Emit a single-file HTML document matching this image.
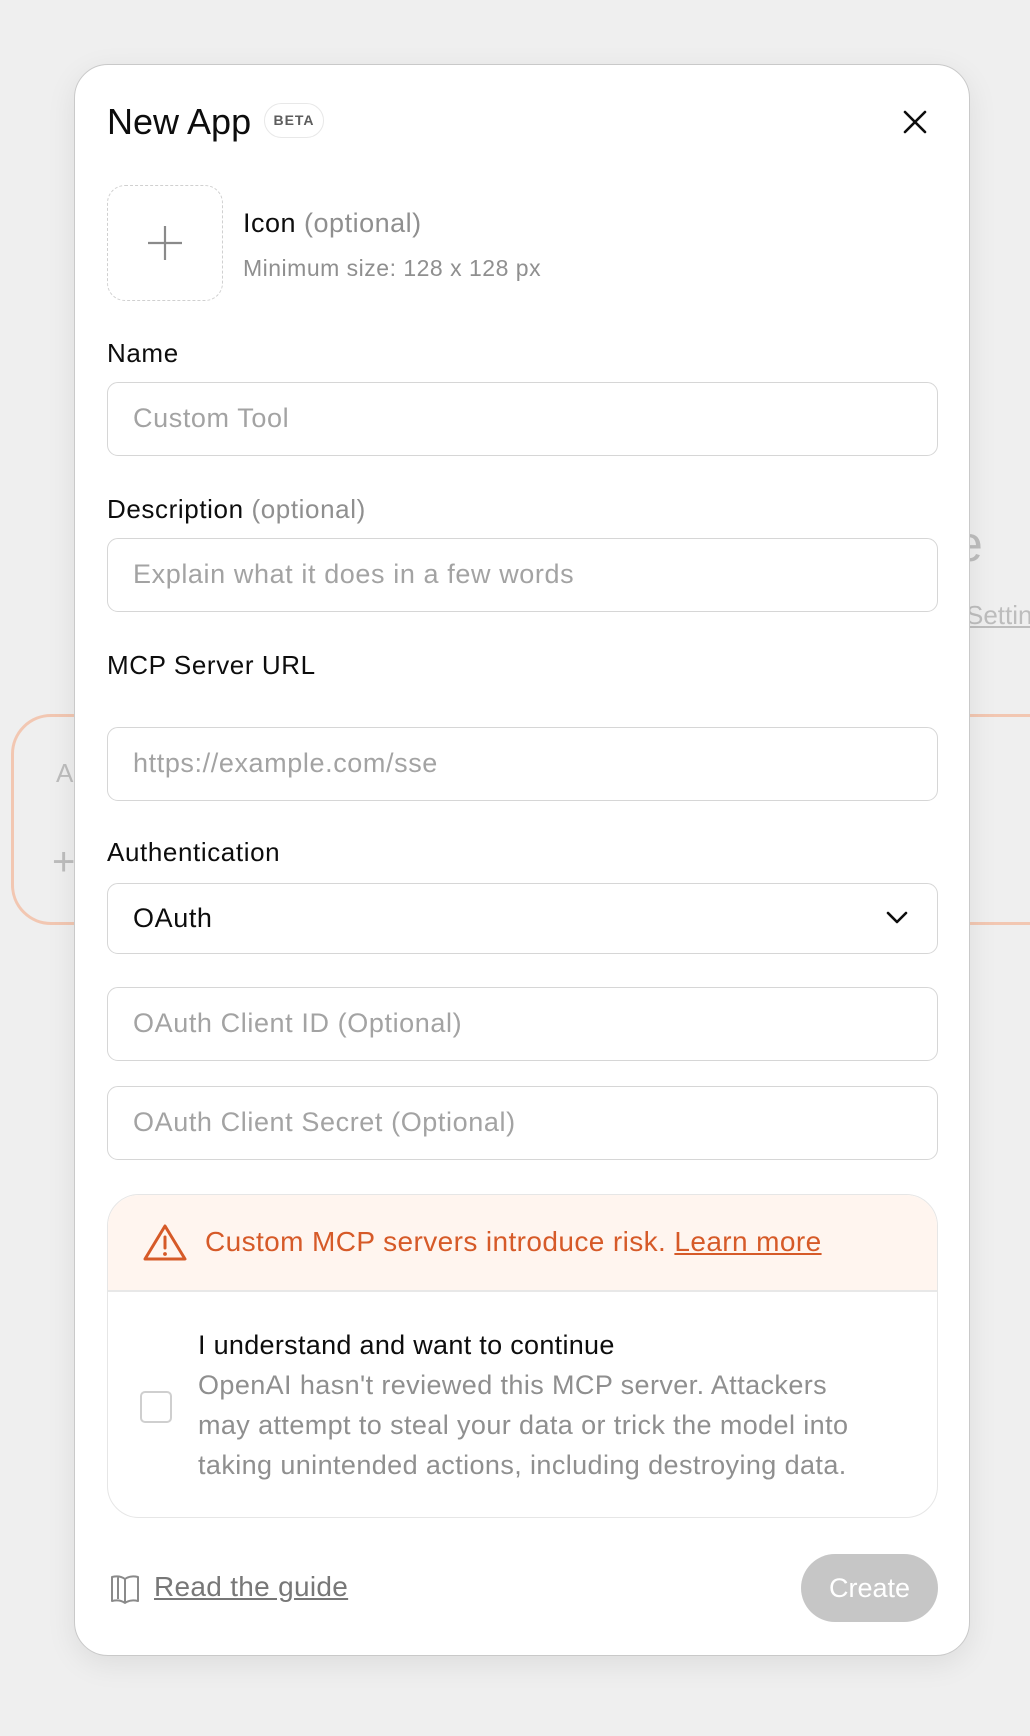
<!DOCTYPE html>
<html><head><meta charset="utf-8"><style>
*{box-sizing:border-box;margin:0;padding:0}
body{width:1030px;height:1736px;background:#efefef;font-family:"Liberation Sans",sans-serif;position:relative;overflow:hidden;color:#0d0d0d}
.abs{position:absolute}
.ghost{color:#bdbdbd}
.modal{position:absolute;left:74px;top:64px;width:896px;height:1592px;background:#fff;border:1px solid #c9c9c9;border-radius:34px;box-shadow:0 8px 30px rgba(0,0,0,.08)}
.lbl{position:absolute;left:32px;font-size:26px;letter-spacing:.6px;color:#0d0d0d}
.opt{color:#8f8f8f}
.inp{position:absolute;left:32px;width:831px;height:74px;border:1.5px solid #d6d6d6;border-radius:11px;font-size:27px;letter-spacing:.6px;color:#a3a3a3;padding-left:25px;line-height:71px}
</style></head><body>
<div class="abs ghost" style="left:955px;top:515px;font-size:50px">e</div>
<div class="abs ghost" style="left:966px;top:600px;font-size:26px;text-decoration:underline">Settin</div>
<div class="abs" style="left:11px;top:714px;width:120px;height:211px;border:3px solid #f2c7b2;border-radius:40px"></div>
<div class="abs ghost" style="left:56px;top:758px;font-size:26px">A</div>
<div class="abs ghost" style="left:52px;top:840px;font-size:40px">+</div>
<div class="abs" style="left:930px;top:714px;width:200px;height:211px;border:3px solid #f2c7b2;border-radius:40px"></div>

<div class="modal">
  <div class="abs" style="left:32px;top:36px;font-size:36px;color:#0d0d0d">New App</div>
  <div class="abs" style="left:189px;top:38px;width:60px;height:35px;border:1.5px solid #e8e8e8;border-radius:18px;font-size:14px;font-weight:bold;color:#5d5d5d;text-align:center;line-height:32px;letter-spacing:1px">BETA</div>
  <svg class="abs" style="left:826px;top:43px" width="28" height="28" viewBox="0 0 28 28"><path d="M4 4L24 24M24 4L4 24" stroke="#0d0d0d" stroke-width="2.6" stroke-linecap="round"/></svg>

  <div class="abs" style="left:32px;top:120px;width:116px;height:116px;border:1.5px dashed #d0d0d0;border-radius:18px"></div>
  <svg class="abs" style="left:72px;top:160px" width="36" height="36" viewBox="0 0 36 36"><path d="M18 1V35M1 18H35" stroke="#8a8a8a" stroke-width="2.2"/></svg>
  <div class="abs" style="left:168px;top:143px;font-size:27px;letter-spacing:.5px">Icon <span class="opt">(optional)</span></div>
  <div class="abs" style="left:168px;top:190px;font-size:23px;letter-spacing:.5px;color:#8f8f8f">Minimum size: 128 x 128 px</div>

  <div class="lbl" style="top:273px">Name</div>
  <div class="inp" style="top:317px">Custom Tool</div>
  <div class="lbl" style="top:429px">Description <span class="opt">(optional)</span></div>
  <div class="inp" style="top:473px">Explain what it does in a few words</div>
  <div class="lbl" style="top:585px">MCP Server URL</div>
  <div class="inp" style="top:662px">https://example.com/sse</div>
  <div class="lbl" style="top:772px">Authentication</div>
  <div class="inp" style="top:818px;height:71px;line-height:68px;color:#0d0d0d">OAuth
    <svg class="abs" style="right:28px;top:26px" width="24" height="16" viewBox="0 0 24 16"><path d="M3 3L12 12L21 3" fill="none" stroke="#0d0d0d" stroke-width="2.6" stroke-linecap="round" stroke-linejoin="round"/></svg>
  </div>
  <div class="inp" style="top:922px">OAuth Client ID (Optional)</div>
  <div class="inp" style="top:1021px">OAuth Client Secret (Optional)</div>

  <div class="abs" style="left:32px;top:1129px;width:831px;height:324px;border:1.5px solid #e6e6e6;border-radius:32px;overflow:hidden">
    <div style="height:97px;background:#fff5ef;border-bottom:2px solid #e8e8e8;position:relative">
      <svg class="abs" style="left:34px;top:28px" width="46" height="40" viewBox="0 0 46 40"><path d="M23 3L43 36H3Z" fill="none" stroke="#d65a28" stroke-width="3" stroke-linejoin="round"/><path d="M23 14V25" stroke="#d65a28" stroke-width="3" stroke-linecap="round"/><circle cx="23" cy="31" r="1.9" fill="#d65a28"/></svg>
      <div class="abs" style="left:97px;top:31px;font-size:28px;letter-spacing:.4px;color:#d65a28">Custom MCP servers introduce risk. <span style="text-decoration:underline">Learn more</span></div>
    </div>
    <div class="abs" style="left:32px;top:196px;width:32px;height:32px;border:2px solid #cfcfcf;border-radius:5px"></div>
    <div class="abs" style="left:90px;top:135px;font-size:27px;letter-spacing:.3px;color:#0d0d0d">I understand and want to continue</div>
    <div class="abs" style="left:90px;top:170px;width:690px;font-size:27px;letter-spacing:.4px;line-height:40px;color:#8f8f8f">OpenAI hasn't reviewed this MCP server. Attackers<br>may attempt to steal your data or trick the model into<br>taking unintended actions, including destroying data.</div>
  </div>

  <svg class="abs" style="left:35px;top:1508px" width="30" height="32" viewBox="0 0 30 32"><path d="M15 6C11 3 6 3 2 4V28C6 27 11 27 15 30C19 27 24 27 28 28V4C24 3 19 3 15 6ZM15 6V30M8 4V26" fill="none" stroke="#8a8a8a" stroke-width="2" stroke-linejoin="round"/></svg>
  <div class="abs" style="left:79px;top:1506px;font-size:28px;letter-spacing:.3px;color:#777;text-decoration:underline">Read the guide</div>
  <div class="abs" style="left:726px;top:1489px;width:137px;height:68px;border-radius:34px;background:#c6c6c6;color:#fff;font-size:27px;text-align:center;line-height:68px">Create</div>
</div>
</body></html>
